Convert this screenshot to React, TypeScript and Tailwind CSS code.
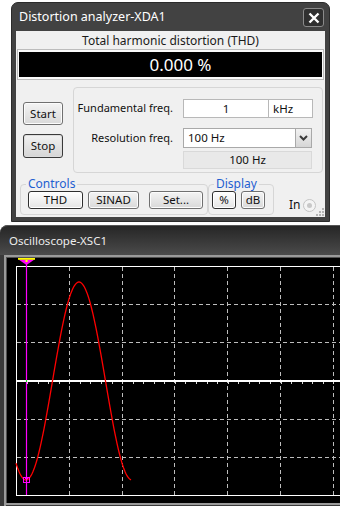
import React from 'react';

const ui = "font-['Segoe_UI','Noto_Sans',sans-serif]";

const btnNormal =
  'border-[#707070] bg-linear-to-b from-[#f4f4f4] to-[#d9d9d9] shadow-[inset_0_0_0_1px_#fcfcfc]';
const btnDown =
  'border-[#2f2f2f] bg-linear-to-b from-[#ffffff] to-[#e4e4e4] shadow-[inset_0_0_0_1px_#ffffff]';
const btnDefault =
  'border-[#3a3a3a] bg-linear-to-b from-[#f2f2f2] to-[#d5d5d5] shadow-[inset_0_0_0_1px_#dcdcdc]';

function Btn({ children, className }: { children: React.ReactNode; className: string }) {
  return (
    <button
      className={`flex items-center justify-center rounded-[3px] border text-[11.5px] leading-none text-[#111] ${className}`}
    >
      {children}
    </button>
  );
}

function Scope() {
  const curve: string[] = [];
  for (let x = 16; x <= 131; x++) {
    const y = 381 + 99 * Math.cos((2 * Math.PI * (x - 26)) / 106);
    curve.push(`${x - 7},${(y - 258).toFixed(1)}`);
  }
  const vLines = [62.5, 115.5, 167.5, 220.5, 273.5, 326.5];
  const hLines = [46.5, 84.5, 161.5, 199.5];
  const ticks: number[] = [];
  for (let i = 1; i < 32; i++) ticks.push(Math.round(9.5 + i * 10.56) + 0.5);

  return (
    <svg width="333" height="246" viewBox="0 0 333 246" className="block">
      {vLines.map((x) => (
        <line key={x} x1={x} y1={9} x2={x} y2={237} stroke="#bdbdbd" strokeDasharray="4 3" />
      ))}
      {hLines.map((y) => (
        <line key={y} x1={10} y1={y} x2={333} y2={y} stroke="#bdbdbd" strokeDasharray="4 3" />
      ))}
      <line x1={9} y1={123} x2={333} y2={123} stroke="#ffffff" strokeWidth={2} />
      {ticks.map((x) => (
        <line key={x} x1={x} y1={124} x2={x} y2={126} stroke="#d8d8d8" />
      ))}
      <line x1={9.5} y1={8} x2={9.5} y2={238} stroke="#ffffff" />
      <line x1={9} y1={8.5} x2={333} y2={8.5} stroke="#ffffff" />
      <line x1={9} y1={237.5} x2={333} y2={237.5} stroke="#ffffff" />
      <polyline points={curve.join(' ')} fill="none" stroke="#ff0000" strokeWidth={1.3} />
      <line x1={19.5} y1={4} x2={19.5} y2={237} stroke="#ff00ff" strokeWidth={1.2} />
      <rect x={19} y={122} width={1} height={2} fill="#00ff00" />
      <polygon points="11.5,1.5 27.5,1.5 19.5,7" fill="#ff00ff" />
      <rect x={11} y={0} width={17} height={1.8} fill="#ffff00" />
      <rect x={18.5} y={2} width={2} height={2} fill="#ffff00" />
      <rect x={16.5} y={219.5} width={6} height={5} fill="none" stroke="#ff00ff" />
      <line x1={18.5} y1={219} x2={18.5} y2={221} stroke="#ff00ff" />
      <line x1={20.5} y1={219} x2={20.5} y2={221} stroke="#ff00ff" />
    </svg>
  );
}

export default function App() {
  return (
    <div className={`w-[340px] h-[506px] overflow-hidden bg-white flex flex-col ${ui}`}>
      {/* Distortion analyzer window */}
      <div className="ml-[11px] mt-[2px] w-[319px] rounded-t-[7px] border border-[#2b2b2b] bg-[#424242] px-[4px] pb-[4px]">
        <div className="h-[28px] flex items-center justify-between pl-[3px] pr-[1px]">
          <span className="text-[12.5px] text-white">Distortion analyzer-XDA1</span>
          <div className="mt-[1px] w-[21px] h-[19px] rounded-[3px] border border-[#8a8a8a] bg-[#303030] flex items-center justify-center">
            <svg width="12" height="12" viewBox="0 0 12 12">
              <path d="M1.5 1.5 L10.5 10.5 M10.5 1.5 L1.5 10.5" stroke="#ffffff" strokeWidth="2.4" />
            </svg>
          </div>
        </div>

        <div className="relative h-[186px] bg-[#f0f0f0] flex flex-col">
          <div className="pt-[1px] h-[18px] text-center text-[12px] leading-[17px] text-[#1a1a1a]">
            Total harmonic distortion (THD)
          </div>
          <div className="mx-[1px] h-[31px] border border-[#bcbcbc] bg-[#fafafa] px-[1px] py-[2px]">
            <div className="h-full bg-black flex items-center justify-center pl-[20px] text-[17px] text-white">
              0.000 %
            </div>
          </div>

          <div className="mt-[7px] flex">
            <div className="w-[57px] pl-[7px] pt-[15px] flex flex-col gap-[9px]">
              <Btn className={`w-[40px] h-[23px] ${btnNormal}`}>Start</Btn>
              <Btn className={`w-[40px] h-[24px] ${btnDefault}`}>Stop</Btn>
            </div>
            <div className="w-[250px] h-[86px] rounded-[4px] border border-[#d6d6d6] pt-[11px] text-[11px] text-[#111]">
              <div className="flex items-center h-[19px]">
                <span className="w-[99px] flex justify-end whitespace-nowrap">Fundamental freq.</span>
                <div className="ml-[10px] flex h-[19px] border border-[#b8b8b8] bg-white text-[11.5px]">
                  <div className="w-[84px] text-center leading-[17px]">1</div>
                  <div className="w-[44px] border-l border-[#b8b8b8] pl-[4px] leading-[17px]">kHz</div>
                </div>
              </div>
              <div className="mt-[10px] flex items-center h-[20px]">
                <span className="w-[99px] flex justify-end whitespace-nowrap">Resolution freq.</span>
                <div className="ml-[10px] w-[129px] h-[20px] flex border border-[#a9a9a9] bg-white text-[11.5px]">
                  <div className="flex-1 pl-[4px] leading-[18px]">100 Hz</div>
                  <div className="w-[16px] border-l border-[#a9a9a9] bg-linear-to-b from-[#f2f2f2] to-[#d6d6d6] flex items-center justify-center">
                    <svg width="9" height="6" viewBox="0 0 9 6">
                      <path d="M1 1 L4.5 4.5 L8 1" fill="none" stroke="#3a3a3a" strokeWidth="2" />
                    </svg>
                  </div>
                </div>
              </div>
              <div className="mt-[3px] flex">
                <div className="ml-[109px] w-[129px] h-[18px] border border-[#d9d9d9] bg-[#e9e9e9] text-center leading-[16px] text-[11.5px]">
                  100 Hz
                </div>
              </div>
            </div>
          </div>

          <div className="mt-[4px] flex items-end">
            <fieldset className="ml-[4px] w-[188px] rounded-[4px] border border-[#d6d6d6] pl-[7px] pb-[5px]">
              <legend className="-ml-[2px] px-[2px] text-[12px] leading-[14px] text-[#1f5fd1]">Controls</legend>
              <div className="flex gap-[5px]">
                <Btn className={`w-[55px] h-[18px] ${btnDown}`}>THD</Btn>
                <Btn className={`w-[51px] h-[18px] ${btnNormal}`}>SINAD</Btn>
                <Btn className={`ml-[5px] w-[54px] h-[18px] ${btnNormal}`}>Set...</Btn>
              </div>
            </fieldset>
            <fieldset className="w-[66px] rounded-[4px] border border-[#d6d6d6] pl-[3px] pb-[5px]">
              <legend className="ml-[2px] px-[2px] text-[12px] leading-[14px] text-[#1f5fd1]">Display</legend>
              <div className="flex gap-[5px]">
                <Btn className={`w-[24px] h-[18px] ${btnDown}`}>%</Btn>
                <Btn className={`w-[24px] h-[18px] ${btnNormal}`}>dB</Btn>
              </div>
            </fieldset>
            <div className="ml-[15px] mb-[3px] flex items-center gap-[3px]">
              <span className="text-[12px] leading-[14px] text-[#111]">In</span>
              <div className="w-[13px] h-[13px] rounded-full border border-[#c4c4c4] bg-[#f4f4f4] flex items-center justify-center">
                <div className="w-[5px] h-[5px] rounded-full bg-[#c8c8c8]" />
              </div>
            </div>
          </div>

          <svg width="8" height="8" viewBox="0 0 8 8" className="absolute right-[1px] bottom-[1px]">
            <rect x="6" y="0" width="2" height="2" fill="#b5b5b5" />
            <rect x="3" y="3" width="2" height="2" fill="#b5b5b5" />
            <rect x="6" y="3" width="2" height="2" fill="#b5b5b5" />
            <rect x="0" y="6" width="2" height="2" fill="#b5b5b5" />
            <rect x="3" y="6" width="2" height="2" fill="#b5b5b5" />
            <rect x="6" y="6" width="2" height="2" fill="#b5b5b5" />
          </svg>
        </div>
      </div>

      {/* Oscilloscope window */}
      <div className="mt-[3px] w-[340px] flex-1 rounded-tl-[8px] bg-[#3a3a3a] flex flex-col">
        <div className="h-[30px] shrink-0 rounded-tl-[8px] border-t border-[#555555] bg-linear-to-b from-[#262626] to-[#4b4b4b] flex items-center pl-[9px]">
          <span className="text-[11.5px] text-[#ededed]">Oscilloscope-XSC1</span>
        </div>
        <div className="flex-1 pl-[4px]">
          <div className="h-full border-l-2 border-t-2 border-[#9a9a9a]">
            <div className="h-[246px] border-l border-t border-[#505050] bg-black">
              <Scope />
            </div>
            <div className="h-[2px] bg-[#9a9a9a]" />
          </div>
        </div>
      </div>
    </div>
  );
}
